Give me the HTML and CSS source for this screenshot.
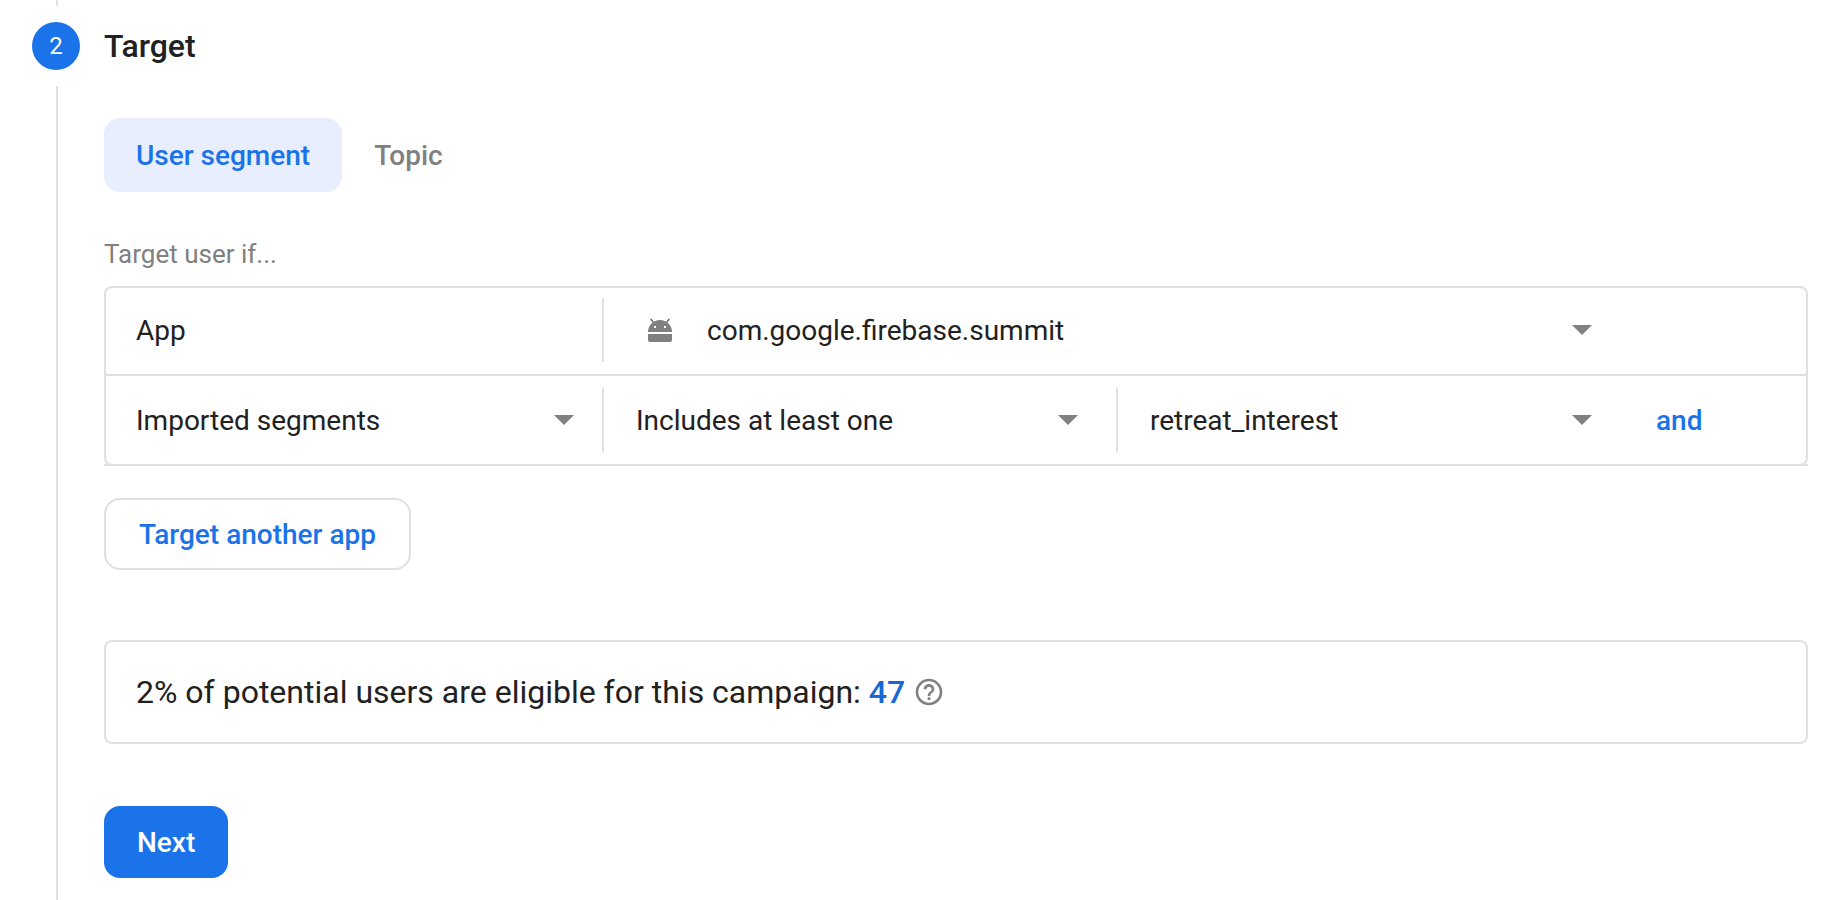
FILE: index.html
```html
<!DOCTYPE html>
<html lang="en">
<head>
    <meta charset="UTF-8">
    <meta name="viewport" content="width=device-width, initial-scale=1.0">
    <title>Target</title>
    <link rel="stylesheet" href="styles.css">
</head>
<body>
    <main class="step">
        <div class="rail">
            <div class="rail-line rail-line-top"></div>
            <div class="step-number">2</div>
            <div class="rail-line rail-line-bottom"></div>
        </div>

        <div class="step-content">
            <h2 class="step-title">Target</h2>

            <div class="tabs" role="tablist">
                <button type="button" class="tab selected" role="tab" aria-selected="true">User segment</button>
                <button type="button" class="tab" role="tab" aria-selected="false">Topic</button>
            </div>

            <p class="hint" id="hint">Target user if...</p>

            <div class="conditions" role="group" aria-labelledby="hint">
                <div class="condition-box">
                    <div class="row row-app">
                        <label class="cell cell-label" for="app">App</label>
                        <div class="cell cell-wide">
                            <svg class="android-icon" viewBox="0 0 24 24" aria-hidden="true">
                                <path fill-rule="evenodd" d="M0 14a12 12 0 0 1 24 0zM6 8v2h2V8zM16 8v2h2V8z"/>
                                <path d="M2.6.9 5.6 4.4M21.4.9l-3 3.5" stroke="currentColor" stroke-width="1.7"/>
                                <path d="M0 16h24v6a2 2 0 0 1-2 2H2a2 2 0 0 1-2-2z"/>
                            </svg>
                            <select id="app" class="select select-app">
                                <option>com.google.firebase.summit</option>
                            </select>
                        </div>
                    </div>
                    <div class="row">
                        <div class="cell cell-first">
                            <select class="select" aria-label="Condition">
                                <option>Imported segments</option>
                            </select>
                        </div>
                        <div class="cell">
                            <select class="select" aria-label="Operator">
                                <option>Includes at least one</option>
                            </select>
                        </div>
                        <div class="cell">
                            <select class="select" aria-label="Segment">
                                <option>retreat_interest</option>
                            </select>
                        </div>
                        <button type="button" class="and-btn">and</button>
                    </div>
                </div>
            </div>

            <button type="button" class="btn btn-outline">Target another app</button>

            <div class="estimate">
                <span>2% of potential users are eligible for this campaign: <strong class="count">47</strong></span>
                <button type="button" class="help-btn" aria-label="Help">
                    <svg class="help-icon" viewBox="0 0 24 24" aria-hidden="true">
                        <path d="M11 18h2v-2h-2v2zm1-16C6.48 2 2 6.48 2 12s4.48 10 10 10 10-4.48 10-10S17.52 2 12 2zm0 18c-4.41 0-8-3.59-8-8s3.59-8 8-8 8 3.59 8 8-3.59 8-8 8zm0-14c-2.21 0-4 1.79-4 4h2c0-1.1.9-2 2-2s2 .9 2 2c0 2-3 1.75-3 5h2c0-2.25 3-2.5 3-5 0-2.21-1.79-4-4-4z"/>
                    </svg>
                </button>
            </div>

            <button type="button" class="btn btn-primary">Next</button>
        </div>
    </main>
</body>
</html>
```
FILE: styles.css
```css
* {
    box-sizing: border-box;
}
body {
    margin: 0;
    font-family: Roboto, "Liberation Sans", sans-serif;
    font-size: 28px;
    color: #212121;
    background-color: #fff;
}
button, select {
    font: inherit;
    color: inherit;
    border: none;
    background: none;
    padding: 0;
    margin: 0;
    cursor: pointer;
}
.step {
    display: flex;
    gap: 24px;
    min-height: 100vh;
    padding: 0 38px 0 32px;
}

/* step indicator */
.rail {
    display: flex;
    flex-direction: column;
    gap: 16px;
    width: 48px;
}
.rail-line {
    width: 2px;
    margin-left: 24px;
    background-color: #e0e0e0;
}
.rail-line-top {
    height: 6px;
}
.rail-line-bottom {
    flex: 1;
}
.step-number {
    height: 48px;
    line-height: 48px;
    border-radius: 50%;
    background-color: #1a73e8;
    color: #fff;
    font-size: 24px;
    text-align: center;
}

.step-content {
    flex: 1;
    min-width: 0;
    padding: 22px 0;
}
.step-title {
    margin: 0 0 48px;
    font-size: 32px;
    line-height: 48px;
    font-weight: 500;
}
.tabs {
    display: flex;
}
.tab {
    height: 74px;
    padding: 0 32px;
    border-radius: 16px;
    font-weight: 500;
    color: #808080;
}
.tab.selected {
    background-color: #e8eefd;
    color: #1a73e8;
}
.hint {
    margin: 46px 0 16px;
    font-size: 26px;
    line-height: 32px;
    color: #808080;
}

/* conditions table, bottom line runs square to both edges */
.conditions {
    background: linear-gradient(#e0e0e0, #e0e0e0) bottom / 100% 2px no-repeat;
}
.condition-box {
    border: 2px solid #e0e0e0;
    border-radius: 8px;
}
.row {
    display: grid;
    grid-template-columns: 498fr 514fr 514fr 174fr;
    align-items: center;
    height: 88px;
}
.row-app {
    padding-bottom: 2px;
    border-bottom: 2px solid #e0e0e0;
}
.cell {
    position: relative;
    display: flex;
    align-items: center;
    height: 64px;
}
.cell + .cell::before {
    content: "";
    position: absolute;
    left: -2px;
    width: 2px;
    height: 64px;
    background-color: #e0e0e0;
}
.cell::after {
    content: "";
    position: absolute;
    right: 40px;
    width: 20px;
    height: 10px;
    background-color: #808080;
    clip-path: polygon(0 0, 100% 0, 50% 100%);
    pointer-events: none;
}
.cell-first::after {
    right: 30px;
}
.cell-label {
    padding-left: 30px;
}
.cell-label::after {
    display: none;
}
.cell-wide {
    grid-column: span 2;
}
.select {
    width: 100%;
    height: 64px;
    padding: 0 64px 0 32px;
    appearance: none;
    outline-offset: -2px;
}
.cell-first .select {
    padding-left: 30px;
}
.android-icon {
    flex: none;
    width: 24px;
    height: 24px;
    margin-left: 44px;
    fill: #808080;
    color: #808080;
}
.select-app {
    padding-left: 35px;
}
.and-btn {
    justify-self: start;
    padding: 0 24px;
    height: 64px;
    font-weight: 500;
    color: #1a73e8;
}

.btn {
    display: block;
    height: 72px;
    padding: 0 33px;
    border-radius: 16px;
    font-weight: 500;
}
.btn-outline {
    margin-top: 32px;
    border: 2px solid #e0e0e0;
    color: #1a73e8;
}
.btn-primary {
    background-color: #1a73e8;
    color: #fff;
}
.estimate {
    display: flex;
    align-items: center;
    gap: 8px;
    height: 104px;
    margin: 70px 0 62px;
    padding: 0 30px;
    border: 2px solid #e0e0e0;
    border-radius: 8px;
    font-size: 32px;
}
.count {
    font-weight: 500;
    color: #1967d2;
}
.help-btn, .help-icon {
    display: block;
    width: 32px;
    height: 32px;
}
.help-icon {
    fill: #808080;
}
```
